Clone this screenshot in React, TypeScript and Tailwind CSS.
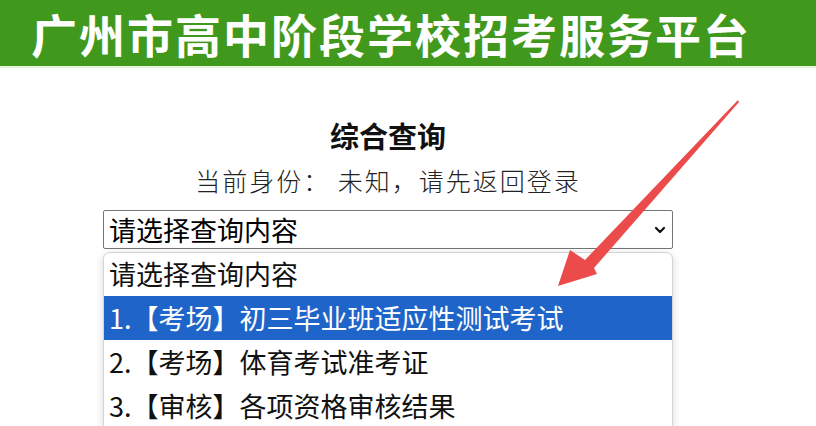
import React from "react";

const options = [
  "1.【考场】初三毕业班适应性测试考试",
  "2.【考场】体育考试准考证",
  "3.【审核】各项资格审核结果",
];

const cjk = { fontFamily: '"Noto Sans CJK SC", "Liberation Sans", sans-serif' };

const App = () => {
  return (
    <div className="relative w-[816px] h-[426px] overflow-hidden bg-white" style={cjk}>
      <div className="h-[66px] bg-[#40991d] flex items-center pl-[31px]">
        <h1 className="text-white text-[46px] font-bold leading-none tracking-[2px]">
          广州市高中阶段学校招考服务平台
        </h1>
      </div>
      <div className="h-[2px] bg-[#e3f2d8]" />

      <div className="ml-[103px] w-[570px] flex flex-col items-center">
        <h2 className="mt-[50px] text-[29px] font-bold leading-[34px] text-[#111]">综合查询</h2>
        <p className="mt-[12px] text-[25px] leading-[32px] text-[#222] font-light tracking-[2px]">
          当前身份： 未知，请先返回登录
        </p>

        <div className="mt-[14px] w-full h-[39px] border border-[#767676] rounded-[2px] flex items-center justify-between pl-[5px] pr-[6px]">
          <span className="text-[27px] leading-none text-black">请选择查询内容</span>
          <svg width="12" height="8" viewBox="0 0 12 8">
            <path d="M2 2 L6 6 L10 2" fill="none" stroke="#111" strokeWidth="2.2" strokeLinecap="round" strokeLinejoin="round" />
          </svg>
        </div>

        <div className="mt-[3px] w-full rounded-t-[7px] border border-[#d4d4d4] bg-white shadow-[0_2px_10px_rgba(0,0,0,0.15)] flex flex-col">
          <div className="h-[43px] flex items-center px-[5px] text-[27px] text-[#111]">请选择查询内容</div>
          {options.map((o, i) => (
            <div
              key={o}
              className={
                i === 0
                  ? "h-[44px] flex items-center px-[5px] text-[27px] bg-[#1f65c9] text-white"
                  : "h-[44px] flex items-center px-[5px] text-[27px] text-[#111]"
              }
            >
              {o}
            </div>
          ))}
        </div>
      </div>

      <svg className="absolute left-0 top-0 pointer-events-none" width="816" height="426" viewBox="0 0 816 426">
        <polygon
          points="738,100 739,102 594,268 597,274 558,286 570,250 585,260"
          fill="#ec4b4b"
        />
      </svg>
    </div>
  );
};

export default App;
